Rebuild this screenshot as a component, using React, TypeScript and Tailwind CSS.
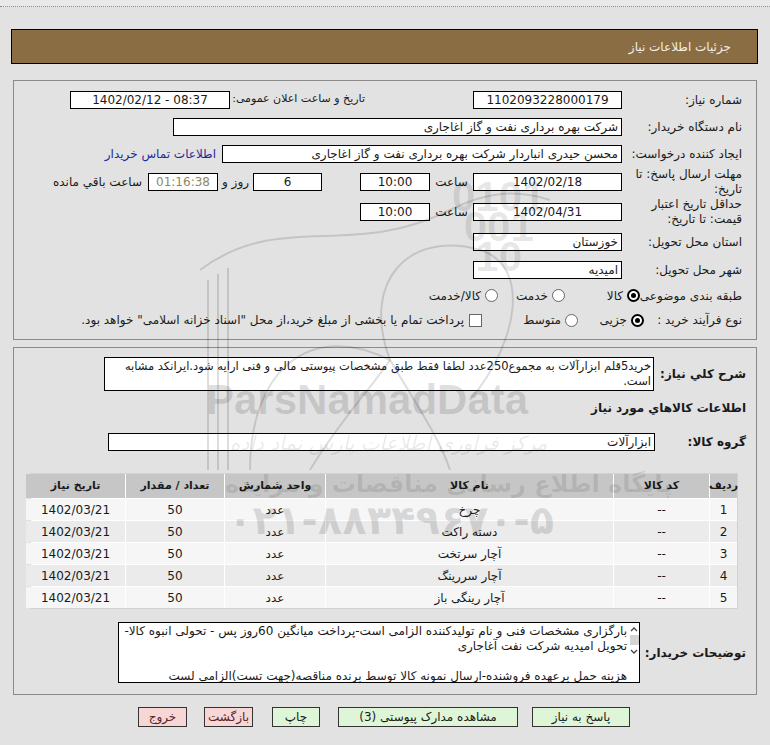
import React from 'react'

function Field({ className = '', children, dir }: { className?: string; children?: React.ReactNode; dir?: string }) {
  return (
    <div
      dir={dir}
      className={`h-[18px] shrink-0 bg-white border border-black flex items-center px-[3px] text-[12px] leading-none whitespace-nowrap overflow-hidden ${className}`}
    >
      {children}
    </div>
  )
}

function Radio({ checked }: { checked?: boolean }) {
  return (
    <span
      className={`w-[13px] h-[13px] rounded-full flex items-center justify-center shrink-0 bg-white ${
        checked ? 'border-2 border-black' : 'border border-[#666]'
      }`}
    >
      {checked && <span className="w-[5px] h-[5px] rounded-full bg-black" />}
    </span>
  )
}

const items = [
  { n: 1, name: 'چرخ' },
  { n: 2, name: 'دسته راکت' },
  { n: 3, name: 'آچار سرتخت' },
  { n: 4, name: 'آچار سررینگ' },
  { n: 5, name: 'آچار رینگی باز' },
]

export default function App() {
  return (
    <div dir="rtl" className="relative w-[770px] h-[745px] overflow-hidden bg-[#e2e2e2] text-[#1a1a1a] font-['DejaVu_Sans',sans-serif] text-[12px]">
      {/* top strip */}
      <div className="h-[7px] bg-[#e9e9e9] border-b border-dotted border-[#8c8c8c]" />

      {/* title bar */}
      <div className="mt-[22px] ml-[11px] mr-[12px] h-[35px] bg-[#8b6d43] border border-black flex items-center pr-[26px] text-[12px] text-[#f3efe4]">
        جزئیات اطلاعات نیاز
      </div>

      {/* panel 1 */}
      <div className="mx-[13px] mt-[16px] h-[260px] border border-[#8a8a8a] pt-[5px] pr-[14px]">
        <div className="flex items-center h-[27px] pl-[56px]">
          <div className="w-[120px] shrink-0">شماره نیاز:</div>
          <Field className="w-[149px] justify-center">1102093228000179</Field>
          <div className="flex-1 mr-[108px] flex items-center justify-between">
            <div className="whitespace-nowrap text-[11px]">تاریخ و ساعت اعلان عمومی:</div>
            <Field dir="ltr" className="w-[160px] justify-center">1402/02/12 - 08:37</Field>
          </div>
        </div>

        <div className="flex items-center h-[27px]">
          <div className="w-[120px] shrink-0">نام دستگاه خریدار:</div>
          <Field className="w-[449px]">شرکت بهره برداری نفت و گاز اغاجاری</Field>
        </div>

        <div className="flex items-center h-[27px]">
          <div className="w-[120px] shrink-0 whitespace-nowrap">ایجاد کننده درخواست:</div>
          <Field className="w-[400px]">محسن حیدری انباردار شرکت بهره برداری نفت و گاز اغاجاری</Field>
          <a className="mr-[6px] text-[#1f2a9c] whitespace-nowrap">اطلاعات تماس خریدار</a>
        </div>

        <div className="flex items-center h-[29px]">
          <div className="w-[120px] shrink-0 leading-[15px]">
            مهلت ارسال پاسخ: تا
            <br />
            تاریخ:
          </div>
          <Field className="w-[149px] justify-center">1402/02/18</Field>
          <div className="w-[43px] shrink-0 text-center">ساعت</div>
          <Field className="w-[70px] justify-center">10:00</Field>
          <Field className="w-[69px] mr-[38px] justify-center">6</Field>
          <div className="w-[35px] shrink-0 text-center">روز و</div>
          <Field dir="ltr" className="w-[70px] justify-center bg-[#ecead2] text-[#8a8a62]">01:16:38</Field>
          <div className="mr-[6px] whitespace-nowrap">ساعت باقي مانده</div>
        </div>

        <div className="flex items-center h-[32px]">
          <div className="w-[120px] shrink-0 leading-[15px]">
            حداقل تاریخ اعتبار
            <br />
            قیمت: تا تاریخ:
          </div>
          <Field className="w-[149px] justify-center">1402/04/31</Field>
          <div className="w-[43px] shrink-0 text-center">ساعت</div>
          <Field className="w-[70px] justify-center">10:00</Field>
        </div>

        <div className="flex items-center h-[28px]">
          <div className="w-[120px] shrink-0">استان محل تحویل:</div>
          <Field className="w-[149px]">خوزستان</Field>
        </div>

        <div className="flex items-center h-[27px]">
          <div className="w-[120px] shrink-0">شهر محل تحویل:</div>
          <Field className="w-[149px]">امیدیه</Field>
        </div>

        <div className="flex items-center h-[25px]">
          <div className="w-[102px] shrink-0 whitespace-nowrap">طبقه بندی موضوعی:</div>
          <div className="w-[75px] shrink-0 flex items-center gap-[4px]">
            <Radio checked />
            <span>کالا</span>
          </div>
          <div className="w-[67px] shrink-0 flex items-center gap-[4px]">
            <Radio />
            <span>خدمت</span>
          </div>
          <div className="flex items-center gap-[4px]">
            <Radio />
            <span>کالا/خدمت</span>
          </div>
        </div>

        <div className="flex items-center h-[24px]">
          <div className="w-[98px] shrink-0 whitespace-nowrap">نوع فرآیند خرید :</div>
          <div className="w-[66px] shrink-0 flex items-center gap-[4px]">
            <Radio checked />
            <span>جزیی</span>
          </div>
          <div className="w-[96px] shrink-0 flex items-center gap-[4px]">
            <Radio />
            <span>متوسط</span>
          </div>
          <div className="flex items-center gap-[5px] whitespace-nowrap">
            <span className="w-[13px] h-[13px] bg-white border border-[#666] shrink-0" />
            <span>پرداخت تمام یا بخشی از مبلغ خرید،از محل "اسناد خزانه اسلامی" خواهد بود.</span>
          </div>
        </div>
      </div>

      {/* panel 2 */}
      <div className="mx-[13px] mt-[7px] h-[348px] border border-[#8a8a8a] pt-[9px]">
        <div className="flex items-center pr-[10px]">
          <div className="w-[92px] shrink-0 font-bold text-[12px] whitespace-nowrap">شرح کلي نیاز:</div>
          <div className="w-[550px] h-[34px] bg-white border border-black px-[2px] pt-[1px] text-[11.5px] leading-[15px] overflow-hidden whitespace-nowrap">
            خرید5قلم ابزارآلات به مجموع250عدد لطفا فقط طبق مشخصات پیوستی مالی و فنی ارایه شود.ایرانکد مشابه
            <br />
            است.
          </div>
        </div>

        <div className="mt-[2px] h-[30px] flex items-center pr-[10px] font-bold text-[12px]">اطلاعات كالاهاي مورد نیاز</div>

        <div className="mt-[7px] h-[24px] flex items-center pr-[10px]">
          <div className="w-[91px] shrink-0 font-bold text-[12px]">گروه كالا:</div>
          <Field className="w-[547px] h-[17px]">ابزارآلات</Field>
        </div>

        {/* table */}
        <div className="mt-[19px] mr-[18px] w-[708px] border border-[#d2d2d2] bg-white">
          <div className="grid grid-cols-[27px_95px_287px_100px_98px_99px] gap-x-[1px] h-[24px] font-bold text-[11px]">
            <div className="bg-[#c6c6c6] flex items-center justify-center">ردیف</div>
            <div className="bg-[#c6c6c6] flex items-center justify-center">کد کالا</div>
            <div className="bg-[#c6c6c6] flex items-center justify-center">نام کالا</div>
            <div className="bg-[#c6c6c6] flex items-center justify-center">واحد شمارش</div>
            <div className="bg-[#c6c6c6] flex items-center justify-center">تعداد / مقدار</div>
            <div className="bg-[#c6c6c6] flex items-center justify-center">تاریخ نیاز</div>
          </div>
          {items.map((it) => (
            <div
              key={it.n}
              className={`grid grid-cols-[27px_95px_287px_100px_98px_99px] gap-x-[1px] h-[21px] mt-[1px] ${
                it.n % 2 === 0 ? '[&>div]:bg-[#ebebeb]' : '[&>div]:bg-[#f6f6f6]'
              }`}
            >
              <div className="flex items-center justify-center">{it.n}</div>
              <div className="flex items-center justify-center">--</div>
              <div className="flex items-center justify-center">{it.name}</div>
              <div className="flex items-center justify-center">عدد</div>
              <div className="flex items-center justify-center">50</div>
              <div className="flex items-center justify-center">1402/03/21</div>
            </div>
          ))}
        </div>

        {/* buyer notes */}
        <div className="mt-[13px] flex items-center pr-[10px]">
          <div className="w-[106px] shrink-0 font-bold text-[12px] whitespace-nowrap">توضیحات خریدار:</div>
          <div className="w-[522px] h-[61px] bg-white border border-black flex">
            <div className="w-[10px] shrink-0 flex flex-col items-center pt-[3px]">
              <svg width="8" height="6" viewBox="0 0 8 6"><path d="M1 5 L4 2 L7 5" fill="none" stroke="#444" strokeWidth="1.3" /></svg>
              <div className="w-[9px] h-[10px] bg-[#d4d4d4] mt-[3px]" />
              <svg width="8" height="6" viewBox="0 0 8 6" className="mt-[4px]"><path d="M1 1 L4 4 L7 1" fill="none" stroke="#444" strokeWidth="1.3" /></svg>
            </div>
            <div className="flex-1 pr-[2px] pt-[1px] text-[12px] leading-[15px] overflow-hidden whitespace-nowrap">
              <div>بارگزاری مشخصات فنی و نام تولیدکننده الزامی است-پرداخت میانگین 60روز پس - تحولی انبوه کالا-</div>
              <div>تحویل امیدیه شرکت نفت آغاجاری</div>
              <div className="h-[15px]" />
              <div>هزینه حمل برعهده فروشنده-ارسال نمونه کالا توسط برنده مناقصه(جهت تست)الزامی لست</div>
            </div>
          </div>
        </div>
      </div>

      {/* buttons */}
      <div className="mt-[12px] flex items-center pr-[140px] text-[12px]">
        <button className="w-[98px] h-[20px] bg-[#dff5d7] border border-[#333] shrink-0">پاسخ به نیاز</button>
        <button className="w-[180px] h-[20px] mr-[14px] bg-[#dff5d7] border border-[#333] shrink-0">مشاهده مدارک پیوستی (3)</button>
        <button className="w-[48px] h-[20px] mr-[18px] bg-[#dff5d7] border border-[#333] shrink-0">چاپ</button>
        <button className="w-[49px] h-[20px] mr-[19px] bg-[#f7d6d6] border border-[#333] shrink-0 text-[#5a2424]">بازگشت</button>
        <button className="w-[49px] h-[20px] mr-[17px] bg-[#f7d6d6] border border-[#333] shrink-0 text-[#5a2424]">خروج</button>
      </div>

      {/* watermark */}
      <div className="pointer-events-none absolute inset-0" dir="ltr">
        <svg className="absolute left-[190px] top-[170px]" width="420" height="300" viewBox="0 0 420 300" fill="none" stroke="rgba(0,0,0,0.13)" strokeWidth="2">
          <path d="M10 100 C 90 40, 160 90, 260 40 C 300 20, 330 20, 360 30" />
          <path d="M18 110 L18 300" />
          <path d="M28 104 L28 300" />
          <path d="M38 98 L38 300" />
          <path d="M60 300 C 60 200, 120 150, 200 190" />
          <path d="M200 190 C 170 110, 220 60, 290 80 C 340 95, 330 170, 280 230" />
          <path d="M200 190 C 230 240, 250 270, 260 300" />
          <path d="M120 300 C 150 250, 180 220, 200 190" />
        </svg>
        <div className="absolute left-[452px] top-[182px] font-['Liberation_Sans',sans-serif] font-bold text-[42px] leading-[30px] text-black/[0.1] text-center">
          <div>0101</div>
          <div>001</div>
          <div>10</div>
        </div>
        <div className="absolute left-[206px] top-[379px] font-['Liberation_Sans',sans-serif] font-bold text-[42px] leading-none text-black/[0.13]">
          ParsNamadData
        </div>
        <div dir="rtl" className="absolute left-[230px] top-[428px] text-[20px] italic text-black/[0.09] whitespace-nowrap">
          مرکز فراوری اطلاعات پارس نماد داده
        </div>
        <div dir="rtl" className="absolute left-[225px] top-[466px] text-[24px] font-bold text-black/[0.1] whitespace-nowrap">
          پایگاه اطلاع رسانی مناقصات و مزایده
        </div>
        <div dir="ltr" className="absolute left-[228px] top-[500px] text-[40px] font-bold leading-none text-black/[0.12] whitespace-nowrap">
          ۰۲۱-۸۸۳۴۹۶۷۰-۵
        </div>
      </div>
    </div>
  )
}
